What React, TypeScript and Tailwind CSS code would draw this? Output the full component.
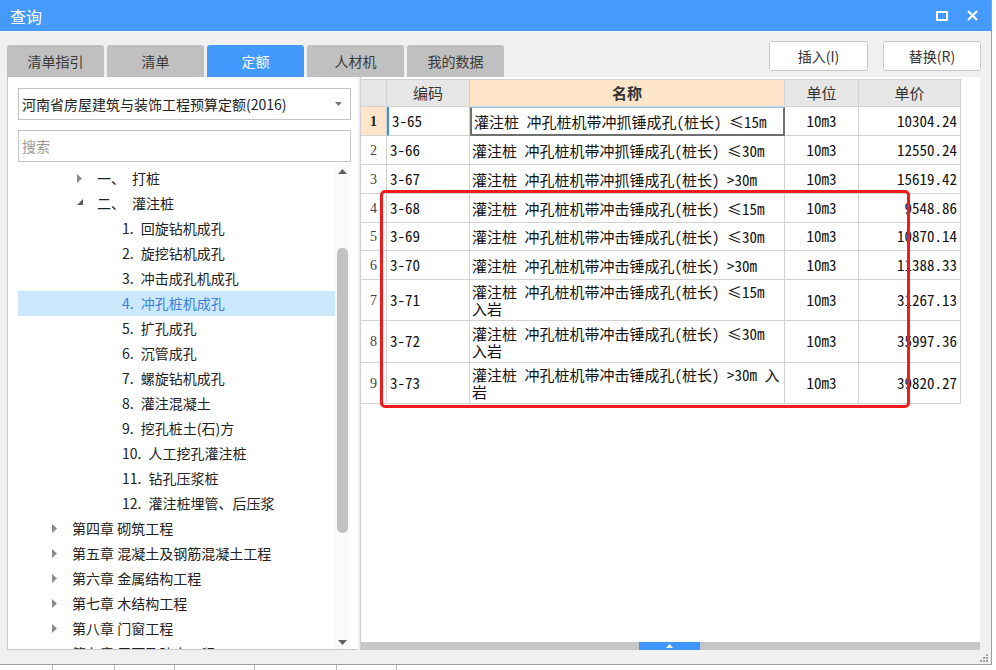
import React from "react";

const SANS = { fontFamily: '"Noto Sans CJK SC", "Noto Sans", sans-serif' };
const CELL = { fontFamily: '"Noto Sans Mono CJK SC", "Noto Sans CJK SC", monospace' };

type Node = { level: 0 | 1 | 2; text: string; sub?: string; arrow?: "right" | "down"; active?: boolean };

const tree: Node[] = [
  { level: 1, text: "一、", sub: "打桩", arrow: "right" },
  { level: 1, text: "二、", sub: "灌注桩", arrow: "down" },
  { level: 2, text: "1.", sub: "回旋钻机成孔" },
  { level: 2, text: "2.", sub: "旋挖钻机成孔" },
  { level: 2, text: "3.", sub: "冲击成孔机成孔" },
  { level: 2, text: "4.", sub: "冲孔桩机成孔", active: true },
  { level: 2, text: "5.", sub: "扩孔成孔" },
  { level: 2, text: "6.", sub: "沉管成孔" },
  { level: 2, text: "7.", sub: "螺旋钻机成孔" },
  { level: 2, text: "8.", sub: "灌注混凝土" },
  { level: 2, text: "9.", sub: "挖孔桩土(石)方" },
  { level: 2, text: "10.", sub: "人工挖孔灌注桩" },
  { level: 2, text: "11.", sub: "钻孔压浆桩" },
  { level: 2, text: "12.", sub: "灌注桩埋管、后压浆" },
  { level: 0, text: "第四章 砌筑工程", arrow: "right" },
  { level: 0, text: "第五章 混凝土及钢筋混凝土工程", arrow: "right" },
  { level: 0, text: "第六章 金属结构工程", arrow: "right" },
  { level: 0, text: "第七章 木结构工程", arrow: "right" },
  { level: 0, text: "第八章 门窗工程", arrow: "right" },
  { level: 0, text: "第九章 屋面及防水工程", arrow: "right" },
];

interface Row {
  n: number;
  code: string;
  name: string[];
  price: string;
  h: string;
}

const rows: Row[] = [
  { n: 1, code: "3-65", name: ["灌注桩 冲孔桩机带冲抓锤成孔(桩长) ≤15m"], price: "10304.24", h: "h-[29px]" },
  { n: 2, code: "3-66", name: ["灌注桩 冲孔桩机带冲抓锤成孔(桩长) ≤30m"], price: "12550.24", h: "h-[29px]" },
  { n: 3, code: "3-67", name: ["灌注桩 冲孔桩机带冲抓锤成孔(桩长) >30m"], price: "15619.42", h: "h-[29px]" },
  { n: 4, code: "3-68", name: ["灌注桩 冲孔桩机带冲击锤成孔(桩长) ≤15m"], price: "9548.86", h: "h-[29px]" },
  { n: 5, code: "3-69", name: ["灌注桩 冲孔桩机带冲击锤成孔(桩长) ≤30m"], price: "10870.14", h: "h-[28px]" },
  { n: 6, code: "3-70", name: ["灌注桩 冲孔桩机带冲击锤成孔(桩长) >30m"], price: "11388.33", h: "h-[29px]" },
  { n: 7, code: "3-71", name: ["灌注桩 冲孔桩机带冲击锤成孔(桩长) ≤15m", "入岩"], price: "31267.13", h: "h-[41px]" },
  { n: 8, code: "3-72", name: ["灌注桩 冲孔桩机带冲击锤成孔(桩长) ≤30m", "入岩"], price: "35997.36", h: "h-[42px]" },
  { n: 9, code: "3-73", name: ["灌注桩 冲孔桩机带冲击锤成孔(桩长) >30m 入", "岩"], price: "39820.27", h: "h-[41px]" },
];

const tabs = ["清单指引", "清单", "定额", "人材机", "我的数据"];

function TitleBar() {
  return (
    <div className="flex h-[31px] shrink-0 items-center bg-[#449bfd] pl-[10px] pr-[13px] text-white">
      <span className="text-[16px] leading-none">查询</span>
      <div className="ml-auto flex items-center gap-[19px]">
        <svg width="12" height="10" viewBox="0 0 12 10">
          <rect x="1" y="1" width="10" height="8" fill="none" stroke="white" strokeWidth="2" />
        </svg>
        <svg width="11" height="11" viewBox="0 0 11 11">
          <path d="M1 1 L10 10 M10 1 L1 10" stroke="white" strokeWidth="2" />
        </svg>
      </div>
    </div>
  );
}

function Arrow({ dir }: { dir: "right" | "down" }) {
  if (dir === "down") {
    return (
      <svg width="7" height="7" viewBox="0 0 7 7">
        <path d="M6 0 L6 6 L0 6 Z" fill="#5a5a5a" />
      </svg>
    );
  }
  return (
    <svg width="5" height="9" viewBox="0 0 5 9">
      <path d="M0 0 L5 4.5 L0 9 Z" fill="#8a8a8a" />
    </svg>
  );
}

function TreeRow({ node }: { node: Node }) {
  return (
    <div
      className={`relative flex h-[25px] shrink-0 items-center text-[14px] ${
        node.active ? "bg-[#cce8ff] text-[#3b7fd8]" : "text-[#222]"
      }`}
    >
      {node.arrow && (
        <span className={`absolute top-[8px] ${node.level === 0 ? "left-[34px]" : "left-[59px]"}`}>
          <Arrow dir={node.arrow} />
        </span>
      )}
      <span className={`whitespace-nowrap ${node.level === 0 ? "pl-[54px]" : node.level === 1 ? "pl-[79px]" : "pl-[104px]"}`}>
        {node.level === 1 ? (
          <>
            <span className="inline-block w-[35px]">{node.text}</span>
            {node.sub}
          </>
        ) : node.level === 2 ? (
          <>
            <span className="mr-[7px]">{node.text}</span>
            {node.sub}
          </>
        ) : (
          node.text
        )}
      </span>
    </div>
  );
}

function LeftPanel() {
  return (
    <div className="flex w-[351px] flex-col border-b border-l border-[#c8c8c8] bg-white pl-[10px] pt-[11px]" style={SANS}>
      <div className="flex h-[32px] w-[333px] items-center border border-[#c4c4c4] pl-[3px] pr-[8px] text-[14px] text-[#222]">
        河南省房屋建筑与装饰工程预算定额(2016)
        <svg className="ml-auto" width="7" height="4" viewBox="0 0 7 4">
          <path d="M0 0 L7 0 L3.5 4 Z" fill="#777" />
        </svg>
      </div>
      <div className="mt-[10px] flex h-[32px] w-[333px] items-center border border-[#c4c4c4] pl-[3px] text-[14px] text-[#9a9a9a]">
        搜索
      </div>
      <div className="mt-[1px] flex h-[486px] w-[332px]">
        <div className="flex w-[317px] flex-col overflow-hidden pt-[3px]">
          {tree.map((n, i) => (
            <TreeRow key={i} node={n} />
          ))}
        </div>
        <div className="relative w-[15px] bg-[#fafafa]">
          <svg className="absolute left-[3px] top-[6px]" width="9" height="5" viewBox="0 0 9 5">
            <path d="M0 5 L4.5 0 L9 5 Z" fill="#606060" />
          </svg>
          <div className="absolute left-[2px] top-[85px] h-[285px] w-[11px] rounded-[5px] bg-[#c2c2c2]" />
          <svg className="absolute bottom-[4px] left-[3px]" width="9" height="5" viewBox="0 0 9 5">
            <path d="M0 0 L9 0 L4.5 5 Z" fill="#606060" />
          </svg>
        </div>
      </div>
    </div>
  );
}

function Table() {
  const cell = "border-b border-r border-[#d2d2d2]";
  return (
    <div className="grid w-[600px] grid-cols-[26px_83px_315px_74px_102px] text-[#111]">
      <div className={`${cell} h-[28px] border-t bg-[#e6e6e6]`} />
      <div className={`${cell} flex h-[28px] items-center justify-center border-t bg-[#e6e6e6] text-[15px] text-[#333]`} style={SANS}>
        编码
      </div>
      <div className={`${cell} flex h-[28px] items-center justify-center border-t bg-[#fee5c9] text-[15px] font-bold text-[#333]`} style={SANS}>
        名称
      </div>
      <div className={`${cell} flex h-[28px] items-center justify-center border-t bg-[#e6e6e6] text-[15px] text-[#333]`} style={SANS}>
        单位
      </div>
      <div className={`${cell} flex h-[28px] items-center justify-center border-t bg-[#e6e6e6] text-[15px] text-[#333]`} style={SANS}>
        单价
      </div>
      {rows.map((r) => {
        const first = r.n === 1;
        return (
          <React.Fragment key={r.n}>
            <div
              className={`${cell} ${r.h} flex items-center justify-center text-[14px] ${
                first ? "bg-[#fee5c9] font-bold text-[#222]" : "text-[#444]"
              }`}
              style={{ fontFamily: '"Liberation Serif", serif' }}
            >
              {r.n}
            </div>
            <div
              className={`${cell} ${r.h} flex items-center pl-[3px] text-[15px] ${first ? "border-l-2 border-l-[#3d8ef2] pl-[1px]" : ""}`}
              style={CELL}
            >
              {r.code}
            </div>
            <div
              className={`${r.h} flex flex-col justify-center whitespace-nowrap pl-[2px] text-[15px] leading-[17px] ${
                first ? "border-2 border-t border-[#6f6f6f] border-t-[#9cc4f2]" : cell
              }`}
              style={CELL}
            >
              {r.name.map((l, i) => (
                <span key={i}>{l}</span>
              ))}
            </div>
            <div className={`${cell} ${r.h} flex items-center justify-center text-[15px]`} style={CELL}>
              10m3
            </div>
            <div className={`${cell} ${r.h} flex items-center justify-end pr-[3px] text-[15px]`} style={CELL}>
              {r.price}
            </div>
          </React.Fragment>
        );
      })}
    </div>
  );
}

function RightPanel() {
  return (
    <div className="ml-[2px] flex w-[620px] flex-col border-l border-[#cfcfcf] bg-white pt-[2px]">
      <Table />
      <div className="flex-1" />
      <div className="flex h-[8px] bg-[#c6c6c6] pl-[278px]">
        <div className="flex h-[8px] w-[61px] items-center justify-center bg-[#3d97fc]">
          <svg width="7" height="4" viewBox="0 0 7 4">
            <path d="M0 4 L3.5 0 L7 4 Z" fill="white" />
          </svg>
        </div>
      </div>
    </div>
  );
}

export default function App() {
  return (
    <div className="relative h-[670px] w-[996px] overflow-hidden bg-white" style={SANS}>
      <div className="relative flex h-[665px] w-[992px] flex-col border-b border-r border-[#9c9c9c] bg-[#f0f0f0]">
        <TitleBar />
        <div className="flex h-[46px] shrink-0 items-end pl-[7px] pr-[10px]">
          <div className="flex gap-[3px]">
            {tabs.map((t) => (
              <div
                key={t}
                className={`flex h-[32px] w-[97px] items-center justify-center rounded-t-[3px] text-[14px] ${
                  t === "定额" ? "bg-[#419afc] text-white" : "bg-[#c0c0c0] text-[#3a3a3a]"
                }`}
              >
                {t}
              </div>
            ))}
          </div>
          <div className="mb-[6px] ml-auto flex gap-[15px]">
            <button className="h-[30px] w-[99px] rounded-[3px] border border-[#c8c8c8] bg-white text-[14px] text-[#333]">
              插入(I)
            </button>
            <button className="h-[30px] w-[98px] rounded-[3px] border border-[#c8c8c8] bg-white text-[14px] text-[#333]">
              替换(R)
            </button>
          </div>
        </div>
        <div className="flex h-[573px] shrink-0 pl-[7px]">
          <LeftPanel />
          <RightPanel />
        </div>
        <svg className="absolute bottom-[2px] right-[3px]" width="8" height="8" viewBox="0 0 8 8">
          <rect x="6" y="0" width="2" height="2" fill="#a0a0a0" />
          <rect x="3" y="3" width="2" height="2" fill="#a0a0a0" />
          <rect x="6" y="3" width="2" height="2" fill="#a0a0a0" />
          <rect x="0" y="6" width="2" height="2" fill="#a0a0a0" />
          <rect x="3" y="6" width="2" height="2" fill="#a0a0a0" />
          <rect x="6" y="6" width="2" height="2" fill="#a0a0a0" />
        </svg>
      </div>
      <div className="flex h-[5px] text-[9px] leading-none text-[#555]">
        <div className="w-[53px] border-r border-[#bbb]" />
        <div className="w-[62px] border-r border-[#bbb]" />
        <div className="w-[60px] border-r border-[#bbb]" />
        <div className="w-[80px] border-r border-[#bbb]" />
        <div className="w-[82px] border-r border-[#bbb]" />
        <div className="w-[60px] border-r border-[#bbb]" />
      </div>
      <div className="pointer-events-none absolute left-[380px] top-[190px] h-[218px] w-[530px] rounded-[5px] border-[3px] border-[#f01c1c]" />
    </div>
  );
}
